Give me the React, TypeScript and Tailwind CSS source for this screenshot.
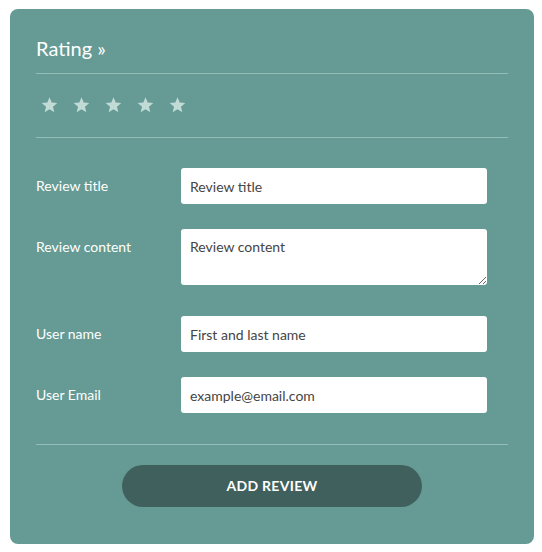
import React from "react";

const Star = () => (
  <svg width="17" height="16" viewBox="0 0 24 23" className="block">
    <polygon
      points="12,0.5 15.1,8 23.2,8.6 17,13.9 18.9,21.8 12,17.5 5.1,21.8 7,13.9 0.8,8.6 8.9,8"
      fill="#c3dbd7"
    />
  </svg>
);

export default function App() {
  const font = { fontFamily: "Lato, 'Open Sans', sans-serif" };
  return (
    <div className="w-[542px] h-[552px] bg-white pt-[9px] pl-[10px]" style={font}>
      <div className="w-[524px] h-[535px] bg-[#659b94] rounded-lg px-[26px] flex flex-col">
        <div className="pt-[27px] h-[51px] text-[20px] leading-[24px] text-white">Rating »</div>
        <div className="mt-[13px] h-px bg-[#97bdb7]" />
        <div className="flex gap-[15px] ml-[5px] mt-[23px] h-[16px]">
          <Star />
          <Star />
          <Star />
          <Star />
          <Star />
        </div>
        <div className="mt-[24px] h-px bg-[#97bdb7]" />
        <div className="mt-[30px] grid grid-cols-[145px_306px] gap-y-[25px] items-start">
          <div className="h-9 flex items-center text-sm text-white">Review title</div>
          <input
            className="h-9 bg-white rounded-[3px] px-[9px] text-sm text-[#444] placeholder:text-[#454545] outline-none"
            placeholder="Review title"
          />
          <div className="h-9 flex items-center text-sm text-white">Review content</div>
          <div className="mb-[6px]">
            <textarea
              className="block w-[306px] h-[56px] bg-white rounded-[3px] px-[9px] pt-[8px] text-sm leading-[20px] text-[#444] placeholder:text-[#454545] outline-none resize-y"
              placeholder="Review content"
            />
          </div>
          <div className="h-9 flex items-center text-sm text-white">User name</div>
          <input
            className="h-9 bg-white rounded-[3px] px-[9px] text-sm text-[#444] placeholder:text-[#454545] outline-none"
            placeholder="First and last name"
          />
          <div className="h-9 flex items-center text-sm text-white">User Email</div>
          <input
            className="h-9 bg-white rounded-[3px] px-[9px] text-sm text-[#444] placeholder:text-[#454545] outline-none"
            placeholder="example@email.com"
          />
        </div>
        <div className="mt-[31px] h-px bg-[#97bdb7]" />
        <div className="mt-[20px] flex justify-center">
          <button className="w-[300px] h-[42px] rounded-full bg-[#3f605c] text-white text-sm font-bold tracking-[0.3px] flex items-center justify-center">
            ADD REVIEW
          </button>
        </div>
      </div>
    </div>
  );
}
